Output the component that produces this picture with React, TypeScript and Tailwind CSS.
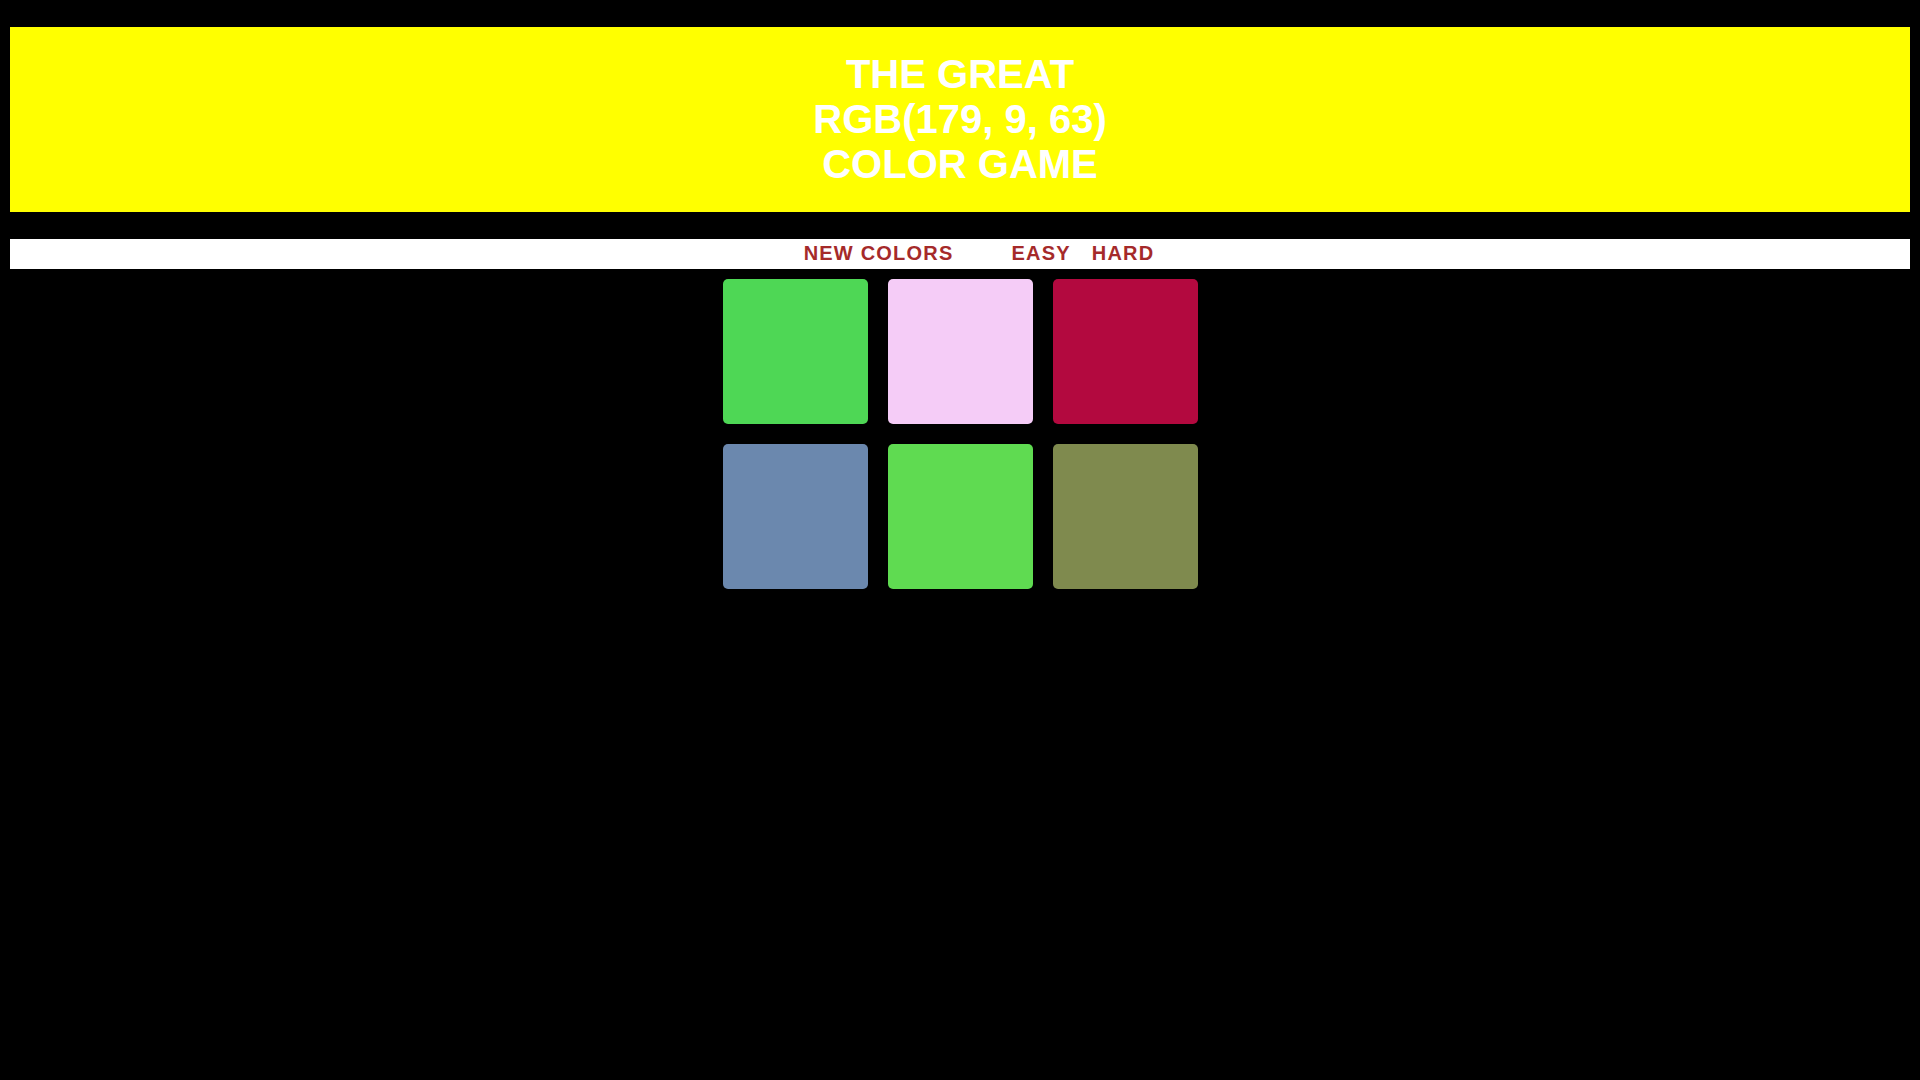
const SQUARES = ['#4ed755', '#f5ccf7', '#b3093f', '#6b88ae', '#5fdb51', '#7f8a4e'];

export default function App() {
  return (
    <div className="min-h-screen bg-black px-[10px] pt-[27px] font-['Liberation_Sans',Arial,sans-serif]">
      <h1 className="bg-[#ffff00] pt-[25px] pb-[25px] text-center text-[40px] font-bold uppercase leading-[45px] text-white">
        The Great
        <br />
        RGB(179, 9, 63)
        <br />
        Color Game
      </h1>

      <div className="mt-[27px] flex h-[30px] items-center justify-center bg-white pb-[2px] pl-[38px] text-[20px] font-bold uppercase tracking-[1.2px] text-[#a52a2a]">
        <button type="button" className="uppercase">New Colors</button>
        <span className="w-[58px]" />
        <button type="button" className="uppercase">Easy</button>
        <button type="button" className="ml-[21px] uppercase">Hard</button>
      </div>

      <div className="mx-auto mt-[10px] grid w-[475px] grid-cols-3 gap-[20px]">
        {SQUARES.map((c, i) => (
          <div key={i} className="h-[145px] w-[145px] rounded-[5px]" style={{ backgroundColor: c }} />
        ))}
      </div>
    </div>
  );
}
